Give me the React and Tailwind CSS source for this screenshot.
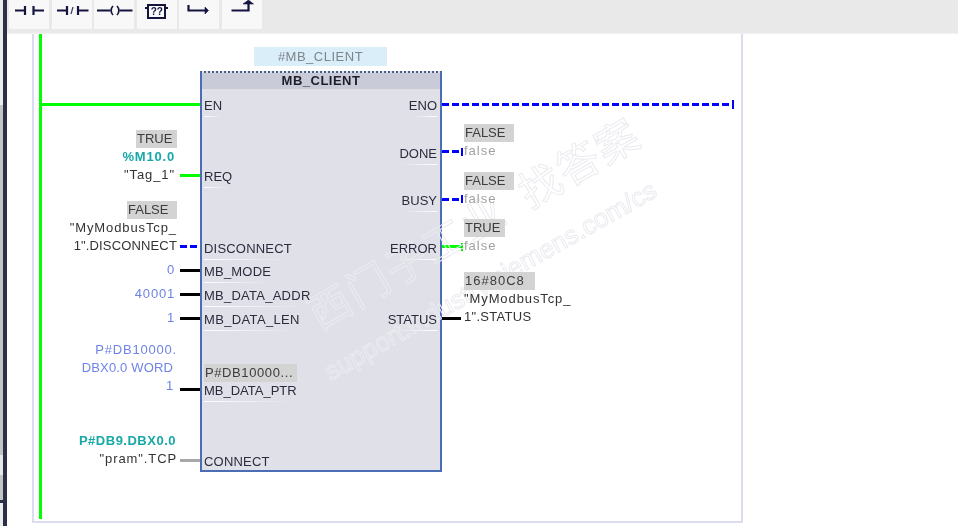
const navy = "#14143f";

const ContactIcon = () => (
  <svg width="40" height="29" viewBox="0 0 40 29" fill="none" stroke={navy} strokeWidth="2.200">
    <path d="M6 10.500h10M16 6v9M24.500 6v9M24.500 10.500h10.500" />
  </svg>
);

const ClosedContactIcon = () => (
  <svg width="40" height="29" viewBox="0 0 40 29" fill="none" stroke={navy} strokeWidth="2.200">
    <path d="M5 10.500h10M15 6v9M26 6v9M26 10.500h10.500" />
    <path d="M19 14l2-7" strokeWidth="1.300" stroke="#44446a" />
  </svg>
);

const CoilIcon = () => (
  <svg width="40" height="29" viewBox="0 0 40 29" fill="none" stroke={navy} strokeWidth="2.200">
    <path d="M3 10.500h13.500M25.500 10.500h13" />
    <path d="M19 6c-2.500 2.500-2.500 6.500 0 9M23 6c2.500 2.500 2.500 6.500 0 9" strokeWidth="1.700" />
  </svg>
);

const BoxIcon = () => (
  <div className="flex h-[29px] w-10 justify-center">
    <div className="relative mt-[4px] flex h-[15px] w-[19px] items-center justify-center border-2 border-[#14143f] text-[10px] leading-none font-bold text-[#14143f]">
      ??
      <span className="absolute top-[1px] left-[-4px] h-[2px] w-[2px] bg-[#14143f]" />
      <span className="absolute top-[1px] right-[-4px] h-[2px] w-[2px] bg-[#14143f]" />
    </div>
  </div>
);

const BranchOpenIcon = () => (
  <svg width="40" height="29" viewBox="0 0 40 29" fill="none" stroke={navy} strokeWidth="2.200">
    <path d="M9.500 5v5.500h17" />
    <path d="M26 7l3.500 3.500L26 14z" fill={navy} strokeWidth="0.600" />
  </svg>
);

const BranchCloseIcon = () => (
  <svg width="40" height="29" viewBox="0 0 40 29" fill="none" stroke={navy} strokeWidth="2.200">
    <path d="M9.500 10.500h17V3" />
    <path d="M21 4l5.500-4 5 4z" fill={navy} strokeWidth="0.600" />
  </svg>
);

const tools = [ContactIcon, ClosedContactIcon, CoilIcon, BoxIcon, BranchOpenIcon, BranchCloseIcon];

const rowGrid = "grid grid-rows-[repeat(16,23.75px)]";
const dashed = "bg-[repeating-linear-gradient(90deg,#0000ff_0_7px,transparent_7px_10px)]";

const Line = ({ className = "", children }) => (
  <div className={`relative z-10 h-[18px] text-[13px] leading-[18px] whitespace-nowrap ${className}`}>{children}</div>
);

const Value = ({ className = "", children }) => (
  <div className={`relative z-10 h-[18px] bg-[#d3d3d3] pl-[1px] text-[13px] leading-[18px] whitespace-nowrap text-[#3c3c3c] ${className}`}>
    {children}
  </div>
);

// pin name inside the block, with its fading white underline
const Pin = ({ className = "", right, children }) => (
  <div className={`flex flex-col ${right ? "items-end justify-self-end" : "items-start justify-self-start"} ${className}`}>
    <Line>{children}</Line>
    <div className={`mt-[1px] h-px w-full from-white to-transparent ${right ? "bg-linear-to-l" : "bg-linear-to-r"}`} />
  </div>
);

const InputPin = ({ className = "", wire = "bg-black", children }) => (
  <div className={`flex items-end justify-end pb-[8px] ${className}`}>
    <div className="flex flex-col items-end">{children}</div>
    <div className={`mb-[7px] ml-[3px] h-[3px] w-[20px] shrink-0 ${wire}`} />
  </div>
);

const OutputPin = ({ className = "", wire = "bg-black", tick = "bg-[#0000ff]", children }) => (
  <div className={`flex items-end pb-[8px] ${className}`}>
    <div className="mb-[5px] flex h-[7px] w-[21px] shrink-0 items-center">
      <div className={`h-[3px] w-[19px] ${wire}`} />
      <div className={`h-[8px] w-[2px] ${tick}`} />
    </div>
    <div className="ml-[1px] flex flex-col items-start">{children}</div>
  </div>
);

const blueText = "text-[#6f83e6] tracking-[0.8px]";
const tagText = "text-[#333] tracking-[0.9px]";
const falseText = "text-[#a0a0a0] tracking-[1px]";
const watermark =
  "pointer-events-none absolute z-[5] origin-top-left leading-none whitespace-nowrap text-transparent [-webkit-text-stroke:1px_#ebebf0]";

export default function App() {
  return (
    <div className="flex h-[526px] w-[958px] overflow-hidden bg-white font-['Liberation_Sans',sans-serif] text-[#2c2c3c] blur-[0.35px]">
      <div className="flex w-[7px] shrink-0">
        <div className="flex w-[3px] flex-col">
          <div className="h-[105px] bg-[#ececec]" />
          <div className="h-[350px] bg-[#c4c4c4]" />
          <div className="h-[20px] bg-[#e8e8e8]" />
          <div className="h-[25px] bg-[#c4c4c4]" />
          <div className="h-[3px] bg-[#2a3045]" />
          <div className="flex-1 bg-[#ececec]" />
        </div>
        <div className="w-[4px] bg-[#2a3045]" />
      </div>

      <div className="flex min-w-0 flex-1 flex-col">
        <div className="flex h-[34px] shrink-0 gap-[2.6px] border-b border-[#f2f2f2] bg-[#e9e9e9] pl-[2px]">
          {tools.map((Icon, i) => (
            <div key={i} className="h-[29px] w-10 bg-[#f8f8f8]">
              <Icon />
            </div>
          ))}
        </div>

        <div className="relative flex-1 overflow-hidden pl-[25px]">
          {/* network frame */}
          <div className="flex h-[489px] w-[711px] border-x-2 border-b-2 border-[#dcdcf0] pl-[5px]">
            <div className="h-[485px] w-[3px] shrink-0 bg-[#00ff00]" />

            {/* operands on the left of the block */}
            <div className={`${rowGrid} w-[158px] shrink-0 pt-[63px]`}>
              <div className="flex items-end pb-[15px]">
                <div className="h-[3px] w-full bg-[#00ff00]" />
              </div>
              <InputPin className="row-span-3" wire="bg-[#00ff00]">
                <Value className="w-[41px]">TRUE</Value>
                <Line className="mr-[2px] font-bold tracking-[0.8px] text-[#19a8a8]">%M10.0</Line>
                <Line className={`mr-[2px] ${tagText}`}>"Tag_1"</Line>
              </InputPin>
              <InputPin className="row-span-3" wire={dashed}>
                <Value className="w-[50px]">FALSE</Value>
                <Line className={tagText}>"MyModbusTcp_</Line>
                <Line className="text-[#333] tracking-[0.15px]">1".DISCONNECT</Line>
              </InputPin>
              <InputPin>
                <Line className={`mr-[2px] ${blueText}`}>0</Line>
              </InputPin>
              <InputPin>
                <Line className={`mr-[2px] ${blueText}`}>40001</Line>
              </InputPin>
              <InputPin>
                <Line className={`mr-[2px] ${blueText}`}>1</Line>
              </InputPin>
              <InputPin className="row-span-3">
                <div className="mb-[3px] flex flex-col items-end">
                  <Line className={blueText}>P#DB10000.</Line>
                  <Line className="mr-[4px] text-[#6f83e6] tracking-[0.15px]">DBX0.0 WORD</Line>
                  <Line className={`mr-[3px] ${blueText}`}>1</Line>
                </div>
              </InputPin>
              <InputPin className="row-span-3" wire="bg-[#a8a8a8]">
                <div className="mb-[1px] flex flex-col items-end">
                  <Line className="mr-[1px] font-bold tracking-[0.5px] text-[#19a8a8]">P#DB9.DBX0.0</Line>
                  <Line className={tagText}>"pram".TCP</Line>
                </div>
              </InputPin>
            </div>

            {/* instance name and block */}
            <div className="flex w-[242px] shrink-0 flex-col pt-[13px]">
              <div className="ml-[54px] flex h-[19px] w-[133px] items-center justify-center bg-[#daeef9] text-[13px] tracking-[0.5px] text-[#7d858c]">
                #MB_CLIENT
              </div>
              <div className="mt-[5px] h-[401px] border-2 border-[#4a6db5] border-t-[#4a5f88] bg-[#dfe0e8] [border-top-style:dotted]">
                <div className="flex h-[16px] items-center justify-center bg-[#c9cbd9] text-[13px] font-bold tracking-[0.5px] text-[#1e1e28]">
                  MB_CLIENT
                </div>
                <div className={`${rowGrid} grid-cols-2 pt-[8px] pr-[3px] pl-[2px]`}>
                  <Pin className="col-start-1 row-start-1">EN</Pin>
                  <Pin className="col-start-1 row-start-4">REQ</Pin>
                  <Pin className="col-start-1 row-start-7 tracking-[0.2px]">DISCONNECT</Pin>
                  <Pin className="col-start-1 row-start-8 tracking-[0.2px]">MB_MODE</Pin>
                  <Pin className="col-start-1 row-start-9 tracking-[0.25px]">MB_DATA_ADDR</Pin>
                  <Pin className="col-start-1 row-start-10 tracking-[0.35px]">MB_DATA_LEN</Pin>
                  <Value className="col-start-1 row-start-12 w-[93px] self-end tracking-[0.6px] text-[#2c2c3c]">P#DB10000...</Value>
                  <Pin className="col-start-1 row-start-13">MB_DATA_PTR</Pin>
                  <Pin className="col-start-1 row-start-16 tracking-[0.2px]">CONNECT</Pin>

                  <Pin right className="col-start-2 row-start-1">ENO</Pin>
                  <Pin right className="col-start-2 row-start-3">DONE</Pin>
                  <Pin right className="col-start-2 row-start-5">BUSY</Pin>
                  <Pin right className="col-start-2 row-start-7">ERROR</Pin>
                  <Pin right className="col-start-2 row-start-10">STATUS</Pin>
                </div>
              </div>
            </div>

            {/* operands on the right of the block */}
            <div className={`${rowGrid} min-w-0 flex-1 pt-[63px]`}>
              <div className="flex items-end pb-[15px]">
                <div className={`h-[3px] w-[290px] ${dashed}`} />
                <div className="mb-[-3px] h-[9px] w-[2px] bg-[#0000ff]" />
              </div>
              <OutputPin className="row-span-2" wire={dashed}>
                <Value className="w-[50px]">FALSE</Value>
                <Line className={falseText}>false</Line>
              </OutputPin>
              <OutputPin className="row-span-2" wire={dashed}>
                <Value className="w-[50px]">FALSE</Value>
                <Line className={falseText}>false</Line>
              </OutputPin>
              <OutputPin className="row-span-2" wire="bg-[#00ff00]" tick="bg-[#00dd00]">
                <Value className="w-[41px]">TRUE</Value>
                <Line className={falseText}>false</Line>
              </OutputPin>
              <OutputPin className="row-span-3" tick="bg-transparent">
                <div className="mb-[1px] flex flex-col items-start">
                  <Value className="w-[71px] tracking-[1px]">16#80C8</Value>
                  <Line className={tagText}>"MyModbusTcp_</Line>
                  <Line className="text-[#333] tracking-[0.3px]">1".STATUS</Line>
                </div>
              </OutputPin>
            </div>
          </div>

          {/* watermark */}
          <div className={`${watermark} top-[263px] left-[293px] -rotate-30 font-['Noto_Sans_CJK_SC',sans-serif] text-[42px] tracking-[2px]`}>
            西门子工业&nbsp;&nbsp;找答案
          </div>
          <div className={`${watermark} top-[328px] left-[313px] -rotate-[29.5deg] text-[26px]`}>
            support.industry.siemens.com/cs
          </div>
        </div>
      </div>
    </div>
  );
}
